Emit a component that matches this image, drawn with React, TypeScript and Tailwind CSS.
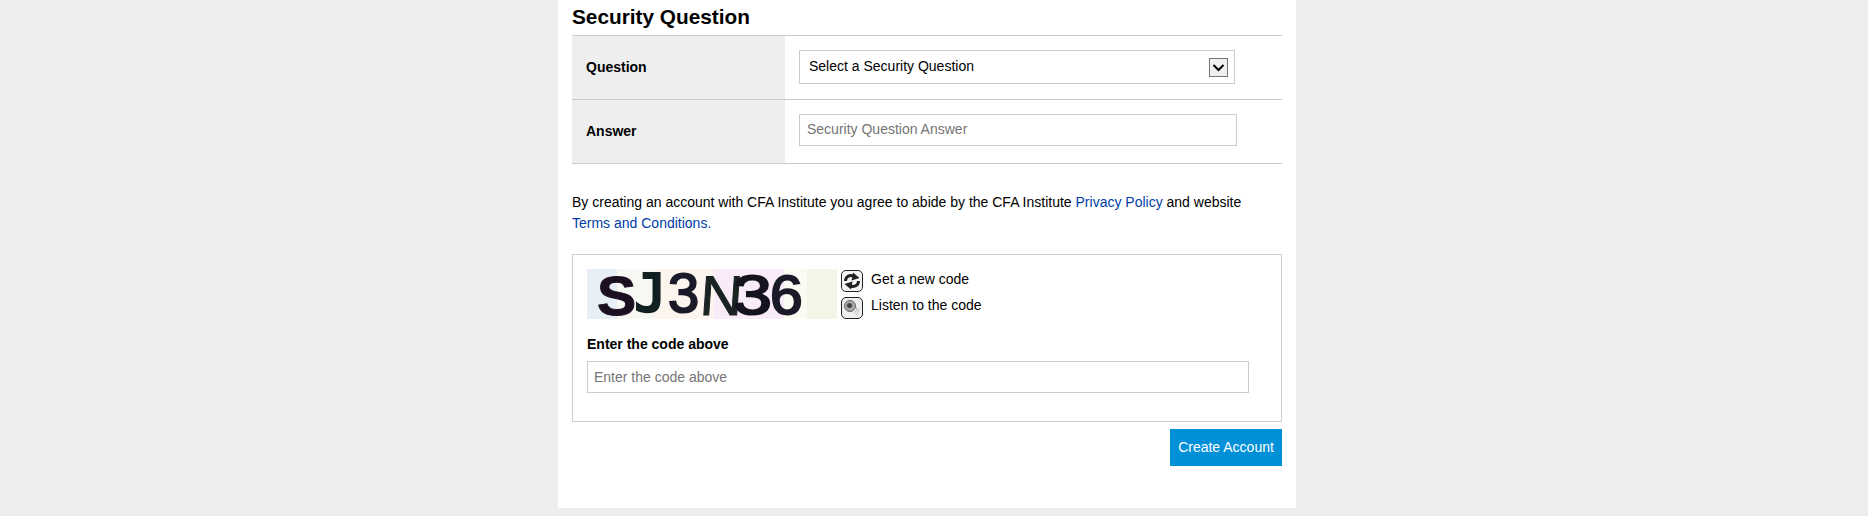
const font = "[font-family:'Liberation_Sans',Arial,sans-serif]"

function RefreshIcon() {
  return (
    <svg width="22" height="22" viewBox="0 0 22 22" className="shrink-0">
      <rect x="0.5" y="0.5" width="21" height="21" rx="4.5" fill="#f4f4f4" stroke="#222" />
      <path d="M4.5 11 C4.5 7 8 4.5 12.5 6" fill="none" stroke="#222" strokeWidth="3" />
      <path d="M12 2.5 L18.5 8 L10.5 10.5 Z" fill="#222" />
      <path d="M17.5 11 C17.5 15 14 17.5 9.5 16" fill="none" stroke="#222" strokeWidth="3" />
      <path d="M10 19.5 L3.5 14 L11.5 11.5 Z" fill="#222" />
    </svg>
  )
}

function SpeakerIcon() {
  return (
    <svg width="22" height="22" viewBox="0 0 22 22" className="shrink-0">
      <rect x="0.5" y="0.5" width="21" height="21" rx="4.5" fill="#eeeeee" stroke="#222" />
      <circle cx="9" cy="9" r="5.5" fill="#a8a8a8" stroke="#666" />
      <circle cx="8.5" cy="8.5" r="2.5" fill="#444" />
      <path d="M15.5 10 C16 12.5 15 15 13 16.5 M17.5 12 C17.5 14.5 16.5 16.5 15 18" fill="none" stroke="#bbb" />
    </svg>
  )
}

function Captcha() {
  const letters = [
    { c: 'S', x: 10, y: 46, sx: 1.05, sk: 0, fam: "'Liberation Sans'", w: 700, fs: 56, sw: 1, fill: '#1c0f22' },
    { c: 'J', x: 46, y: 43, sx: 1.0, sk: 0, fam: "'DejaVu Sans Mono'", w: 700, fs: 56, sw: 0, fill: '#102020' },
    { c: '3', x: 81, y: 43, sx: 1.0, sk: 0, fam: "'Liberation Sans'", w: 400, fs: 56, sw: 2, fill: '#1b1a28' },
    { c: 'N', x: 112, y: 46, sx: 1.05, sk: -4, fam: "'Liberation Sans'", w: 400, fs: 56, sw: 1, fill: '#1a2222' },
    { c: '3', x: 146, y: 45, sx: 1.25, sk: 0, fam: "'Liberation Sans'", w: 400, fs: 56, sw: 2, fill: '#161320' },
    { c: '6', x: 183, y: 45, sx: 1.05, sk: 0, fam: "'Liberation Sans'", w: 400, fs: 56, sw: 2, fill: '#1a1a28' },
  ]

  return (
    <svg width="250" height="50" viewBox="0 0 250 50" className="shrink-0">
      <rect width="30" height="50" fill="#e8eef6" />
      <rect x="30" width="37" height="50" fill="#f7f7f4" />
      <rect x="67" width="60" height="50" fill="#fbf5ee" />
      <rect x="127" width="70" height="50" fill="#f9ecf8" />
      <rect x="197" width="23" height="50" fill="#fbfbf3" />
      <rect x="220" width="30" height="50" fill="#f2f6e6" />
      {letters.map((l, i) => (
        <text
          key={i}
          transform={`translate(${l.x} ${l.y}) skewX(${l.sk}) scale(${l.sx} 1)`}
          fontFamily={`${l.fam}, sans-serif`}
          fontWeight={l.w}
          fontSize={l.fs}
          fill={l.fill}
          stroke={l.fill}
          strokeWidth={l.sw}
        >
          {l.c}
        </text>
      ))}
    </svg>
  )
}

export default function App() {
  return (
    <div className={`h-[516px] overflow-hidden bg-[#eeeeee] text-[14px] leading-[21px] text-black ${font}`}>
      <div className="ml-[558px] h-[508px] w-[738px] bg-white px-[14px]">
        <h2 className="flex h-[35px] items-center pb-[1px] text-[20.8px] font-bold leading-none">Security Question</h2>

        <div className="border-t border-[#cccccc]">
          <div className="flex h-[64px] border-b border-[#cccccc]">
            <div className="flex w-[213px] items-center bg-[#eeeeee] pl-[14px] font-bold">Question</div>
            <div className="ml-[14px] mt-[14px]">
              <div className="flex h-[34px] w-[436px] items-center justify-between border border-[#cccccc] pl-[9px] pr-[6px]">
                <span className="-mt-[1px]">Select a Security Question</span>
                <span className="flex h-[19px] w-[19px] items-center justify-center border border-[#767676] bg-[#efefef]">
                  <svg width="13" height="13" viewBox="0 0 13 13">
                    <path d="M1.5 4 L6.5 9 L11.5 4" fill="none" stroke="#000" strokeWidth="2" />
                  </svg>
                </span>
              </div>
            </div>
          </div>
          <div className="flex h-[64px] border-b border-[#cccccc]">
            <div className="flex w-[213px] items-center bg-[#eeeeee] pl-[14px] font-bold">Answer</div>
            <div className="ml-[14px] mt-[14px]">
              <input
                placeholder="Security Question Answer"
                className="h-[32px] w-[438px] border border-[#cccccc] px-[7px] pb-[2px] outline-none placeholder:text-[#757575]"
              />
            </div>
          </div>
        </div>

        <p className="mt-[28px]">
          By creating an account with CFA Institute you agree to abide by the CFA Institute{' '}
          <a className="text-[#003da5]">Privacy Policy</a> and website
          <br />
          <a className="text-[#003da5]">Terms and Conditions.</a>
        </p>

        <div className="mt-[20px] h-[168px] border border-[#cccccc] pl-[14px] pt-[14px]">
          <div className="flex items-start">
            <Captcha />
            <div className="ml-[4px] flex flex-col gap-[5px] pt-[1px]">
              <div className="flex h-[22px] items-center gap-[8px]">
                <RefreshIcon />
                <span className="-mt-[3px]">Get a new code</span>
              </div>
              <div className="flex h-[22px] items-center gap-[8px]">
                <SpeakerIcon />
                <span className="-mt-[5px]">Listen to the code</span>
              </div>
            </div>
          </div>
          <label className="mt-[15px] block font-bold">Enter the code above</label>
          <input
            placeholder="Enter the code above"
            className="mt-[6px] block h-[32px] w-[662px] border border-[#cccccc] px-[6px] outline-none placeholder:text-[#757575]"
          />
        </div>

        <div className="mt-[7px] flex justify-end">
          <button className="h-[37px] w-[112px] bg-[#0090d7] text-white">Create Account</button>
        </div>
      </div>
    </div>
  )
}
